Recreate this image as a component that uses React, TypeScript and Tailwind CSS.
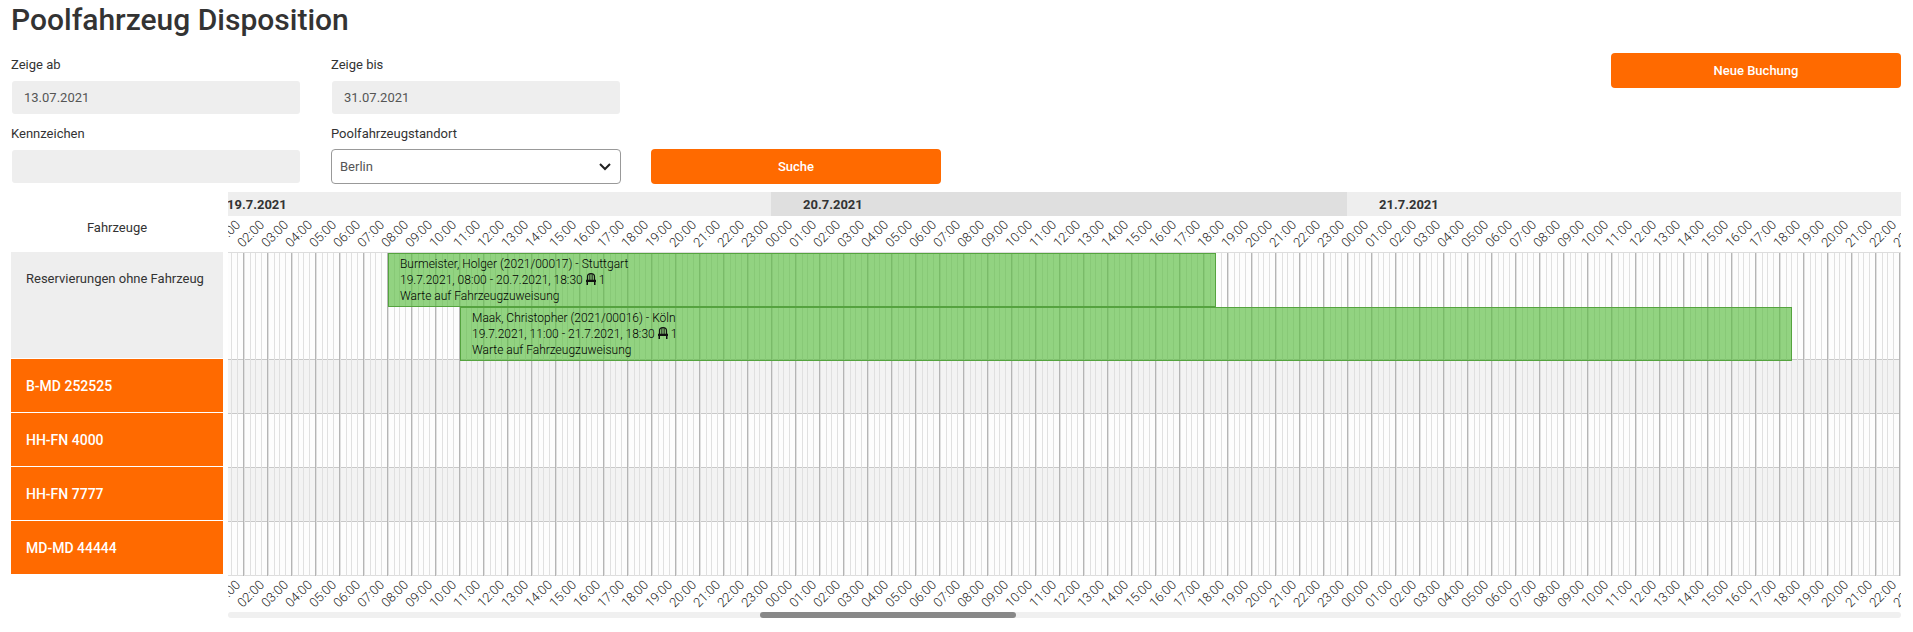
import React from "react";

const DAYS = ["19.7.2021", "20.7.2021", "21.7.2021"];
const HOURS = DAYS.flatMap((day) =>
  Array.from({ length: 24 }, (_, h) => ({
    key: `${day}-${h}`,
    label: `${String(h).padStart(2, "0")}:00`,
  })),
).slice(1);
const HOUR_WIDTH = 24;

const VEHICLES = ["B-MD 252525", "HH-FN 4000", "HH-FN 7777", "MD-MD 44444"];

const BOOKINGS = [
  {
    title: "Burmeister, Holger (2021/00017) - Stuttgart",
    period: "19.7.2021, 08:00 - 20.7.2021, 18:30",
    seats: 1,
    status: "Warte auf Fahrzeugzuweisung",
    startHour: 8,
    hours: 34.5,
  },
  {
    title: "Maak, Christopher (2021/00016) - Köln",
    period: "19.7.2021, 11:00 - 21.7.2021, 18:30",
    seats: 1,
    status: "Warte auf Fahrzeugzuweisung",
    startHour: 11,
    hours: 55.5,
  },
];

const inputClass =
  "h-[35px] w-full rounded border border-transparent bg-[#eee] bg-clip-padding px-3 text-[13px] text-[#555] outline-none";
const buttonClass =
  "h-[35px] w-full cursor-pointer rounded bg-[#ff6a00] text-[13px] font-medium text-white hover:bg-[#e65f00]";

function Field({ id, label, children }: { id: string; label: string; children: React.ReactNode }) {
  return (
    <div className="flex flex-col gap-[5px] pt-0.5">
      <label htmlFor={id} className="text-[13px] leading-5">
        {label}
      </label>
      {children}
    </div>
  );
}

function SeatIcon() {
  return (
    <svg viewBox="0 0 10 12" className="mx-[3px] inline-block h-3 w-[10px] align-[-1px]" aria-hidden="true">
      <path d="M1.500 7V3.500C1.500 1.500 3 .6 5 .6s3.500.9 3.500 2.900V7" fill="none" stroke="#111" strokeWidth="1.200" />
      <path d="M3.400 1.200V7M5 1v6M6.600 1.200V7" fill="none" stroke="#111" strokeWidth=".7" />
      <path d="M0 6.800h10V9H0zM.5 9h1.500v3H.5zM8 9h1.500v3H8z" fill="#111" />
    </svg>
  );
}

function HourScale() {
  return (
    <div className="-ml-[9px] flex h-9 w-max text-[13px] leading-4 font-light text-[#222]">
      {HOURS.map((hour) => (
        <div key={hour.key} className="flex w-6 shrink-0 items-center">
          <span className="w-10 shrink-0 -translate-x-3 -rotate-45 text-center">{hour.label}</span>
        </div>
      ))}
    </div>
  );
}

function Timeline() {
  return (
    <div className="min-w-0 flex-1">
      <div className="overflow-hidden">
        <div className="-ml-[33px] flex w-max">
          {DAYS.map((day) => (
            <div
              key={day}
              className="h-6 w-[576px] pl-8 text-[13px] leading-[26px] font-bold odd:bg-[#eee] even:bg-[#dfdfdf]"
            >
              {day}
            </div>
          ))}
        </div>
        <HourScale />
        <div className="relative overflow-hidden border-t border-[#ddd]">
          <div className="h-[107px] border-b border-[#c8c8c8] bg-[#fdfdfd]" />
          {VEHICLES.map((vehicle) => (
            <div
              key={vehicle}
              className="h-[54px] border-b border-[#c8c8c8] last-of-type:border-[#ddd] odd:bg-[#fdfdfd] even:bg-[#f3f3f3]"
            />
          ))}
          <span
            aria-hidden="true"
            className="absolute inset-y-0 right-0 -left-[33px] bg-[repeating-linear-gradient(to_right,#b5b5b5_0px,#b5b5b5_1px,#e0e0e0_1px,#e0e0e0_2px,transparent_2px,transparent_7px,#e0e0e0_7px,#e0e0e0_8px,transparent_8px,transparent_12px,#e0e0e0_12px,#e0e0e0_13px,transparent_13px,transparent_18px,#e0e0e0_18px,#e0e0e0_19px,transparent_19px,transparent_24px)]"
          />
          <ul className="absolute top-0 -left-8">
            {BOOKINGS.map((b) => (
              <li
                key={b.title}
                className="h-[54px] overflow-hidden border border-[#55a33f] bg-[#5fbe46]/68 px-[11px] pt-0.5 text-xs leading-4 font-light whitespace-nowrap text-black"
                style={{ marginLeft: b.startHour * HOUR_WIDTH, width: b.hours * HOUR_WIDTH }}
              >
                <div>{b.title}</div>
                <div>
                  {b.period}
                  <SeatIcon />
                  {b.seats}
                </div>
                <div>{b.status}</div>
              </li>
            ))}
          </ul>
        </div>
        <HourScale />
      </div>
      <div className="h-1.5 rounded-full bg-[#f0f0f0]">
        <div className="ml-[31.8%] h-full w-[15.3%] rounded-full bg-[#888]" />
      </div>
    </div>
  );
}

export default function App() {
  return (
    <main className="bg-white pr-3 pl-[11px] font-[Roboto,sans-serif] text-[#333]">
      <h1 className="text-[30px] leading-10 font-medium">Poolfahrzeug Disposition</h1>

      <form className="mt-[13px] grid grid-cols-6 gap-x-[30px] gap-y-[7px]" onSubmit={(e) => e.preventDefault()}>
        <Field id="from" label="Zeige ab">
          <input id="from" type="text" defaultValue="13.07.2021" className={inputClass} />
        </Field>
        <Field id="to" label="Zeige bis">
          <input id="to" type="text" defaultValue="31.07.2021" className={inputClass} />
        </Field>
        <div className="col-start-6">
          <button type="button" className={buttonClass}>
            Neue Buchung
          </button>
        </div>
        <Field id="plate" label="Kennzeichen">
          <input id="plate" type="text" className={inputClass} />
        </Field>
        <Field id="location" label="Poolfahrzeugstandort">
          <div className="relative">
            <select
              id="location"
              defaultValue="Berlin"
              className="h-[35px] w-full appearance-none rounded border border-[#999] bg-white px-2 text-[13px] text-[#555] outline-none"
            >
              <option>Berlin</option>
            </select>
            <svg
              viewBox="0 0 12 8"
              className="pointer-events-none absolute top-[14px] right-[10px] h-2 w-3"
              aria-hidden="true"
            >
              <path d="M1 1l5 5 5-5" fill="none" stroke="#222" strokeWidth="2" />
            </svg>
          </div>
        </Field>
        <div className="flex items-end">
          <button type="submit" className={buttonClass}>
            Suche
          </button>
        </div>
      </form>

      <section className="mt-2 flex gap-[5px]">
        <div className="w-[212px] shrink-0">
          <div className="flex h-[60px] items-end justify-center pb-3.5 text-[13px] leading-5">Fahrzeuge</div>
          <ul className="flex flex-col gap-px text-[13px] leading-5">
            <li className="h-[106px] bg-[#eee] px-[15px] pt-[17px] whitespace-nowrap">Reservierungen ohne Fahrzeug</li>
            {VEHICLES.map((vehicle) => (
              <li key={vehicle} className="h-[53px] bg-[#ff6a00] px-[15px] pt-[17px] text-sm leading-5 font-medium text-white">
                {vehicle}
              </li>
            ))}
          </ul>
        </div>
        <Timeline />
      </section>
    </main>
  );
}
